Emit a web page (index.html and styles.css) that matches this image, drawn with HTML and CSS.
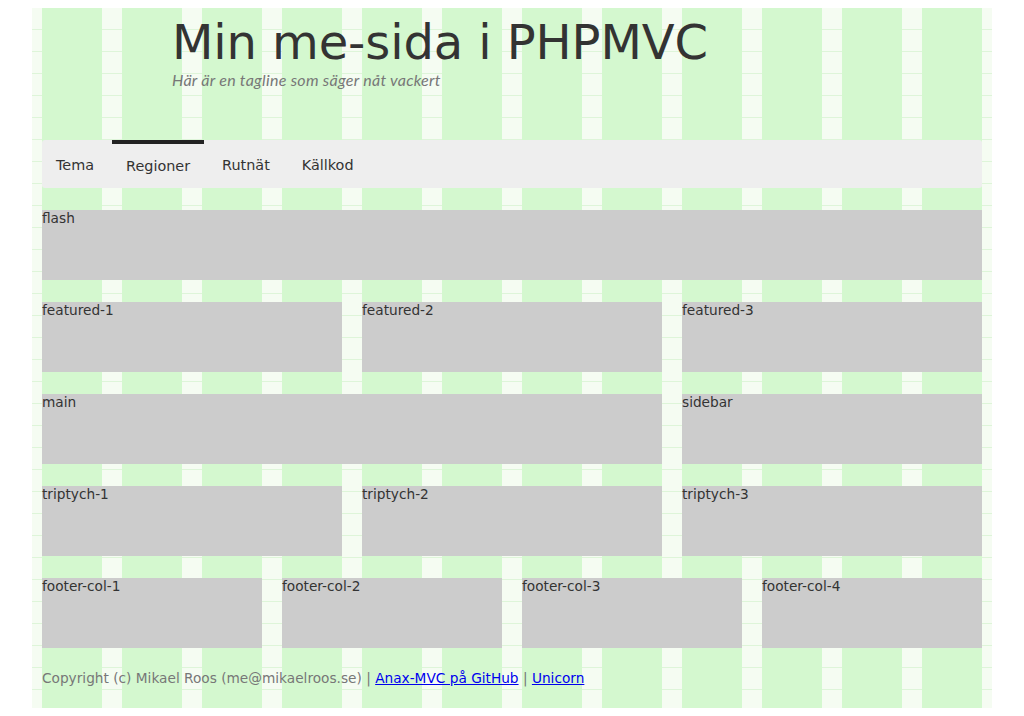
FILE: index.html
```html
<!DOCTYPE html>
<html lang="sv">
<head>
<meta charset="utf-8">
<title>Min me-sida i PHPMVC</title>
<link rel="stylesheet" href="styles.css">
</head>
<body>
<div class="wrapper">
  <header class="site-header">
    <div class="site-title">Min me-sida i PHPMVC</div>
    <div class="site-slogan">Här är en tagline som säger nåt vackert</div>
  </header>
  <nav class="navbar">
    <a class="nav-item" href="#">Tema</a>
    <a class="nav-item selected" href="#">Regioner</a>
    <a class="nav-item" href="#">Rutnät</a>
    <a class="nav-item" href="#">Källkod</a>
  </nav>
  <div class="row cols-1"><div class="region">flash</div></div>
  <div class="row cols-3">
    <div class="region">featured-1</div>
    <div class="region">featured-2</div>
    <div class="region">featured-3</div>
  </div>
  <div class="row cols-main">
    <div class="region">main</div>
    <div class="region">sidebar</div>
  </div>
  <div class="row cols-3">
    <div class="region">triptych-1</div>
    <div class="region">triptych-2</div>
    <div class="region">triptych-3</div>
  </div>
  <div class="row cols-4">
    <div class="region">footer-col-1</div>
    <div class="region">footer-col-2</div>
    <div class="region">footer-col-3</div>
    <div class="region">footer-col-4</div>
  </div>
  <footer class="site-footer">Copyright (c) Mikael Roos (me@mikaelroos.se) | <a href="#">Anax-MVC på GitHub</a> | <a href="#">Unicorn</a></footer>
</div>
</body>
</html>
```

FILE: styles.css
```css
html, body {
  margin: 0;
  padding: 0;
}
body {
  margin: 8px;
  background: #ffffff;
  font-family: "DejaVu Sans", sans-serif;
  font-size: 14px;
  color: #333;
}
.wrapper {
  width: 940px;
  height: 700px;
  margin: 0 auto;
  padding: 0 10px;
  background-color: #f5fcf2;
  background-image:
    repeating-linear-gradient(90deg, #d4f8cf 0 60px, transparent 60px 80px),
    repeating-linear-gradient(180deg, transparent 0 21px, #def5d9 21px 22px);
  background-position: 10px 0, 0 0;
  background-repeat: repeat, repeat;
  box-sizing: content-box;
}
.site-header {
  height: 132px;
  padding-left: 128px;
  box-sizing: border-box;
  padding-top: 6px;
}
.site-title {
  font-size: 48px;
  line-height: 56px;
  color: #333;
  padding-left: 2px;
  letter-spacing: -0.1px;
}
.site-slogan {
  font-family: "Lato", sans-serif;
  font-style: italic;
  font-size: 16px;
  letter-spacing: 0.28px;
  line-height: 20px;
  color: #777;
  padding-left: 2px;
  margin-top: 0;
}
.navbar {
  height: 48px;
  background: #eeeeee;
  border-radius: 3px;
  display: flex;
  gap: 4px;
}
.nav-item {
  display: block;
  padding: 3px 14px 0;
  line-height: 45px;
  color: #333;
  text-decoration: none;
  font-size: 14.4px;
}
.nav-item.selected {
  border-top: 4px solid #222;
  padding-top: 0;
  line-height: 44px;
}
.nav-item.last {
  margin-left: -2px;
}
.row {
  display: grid;
  column-gap: 20px;
  margin-top: 22px;
}
.cols-1 { grid-template-columns: 1fr; }
.cols-3 { grid-template-columns: 300px 300px 300px; }
.cols-main { grid-template-columns: 620px 300px; }
.cols-4 { grid-template-columns: 220px 220px 220px 220px; }
.region {
  height: 70px;
  background: #cccccc;
  color: #333;
  font-size: 13.7px;
  line-height: 17px;
}
.site-footer {
  padding-top: 22px;
  line-height: 16px;
  color: #777;
  font-size: 13.7px;
}
.site-footer a {
  color: #0000ee;
  text-decoration: underline;
}
```
